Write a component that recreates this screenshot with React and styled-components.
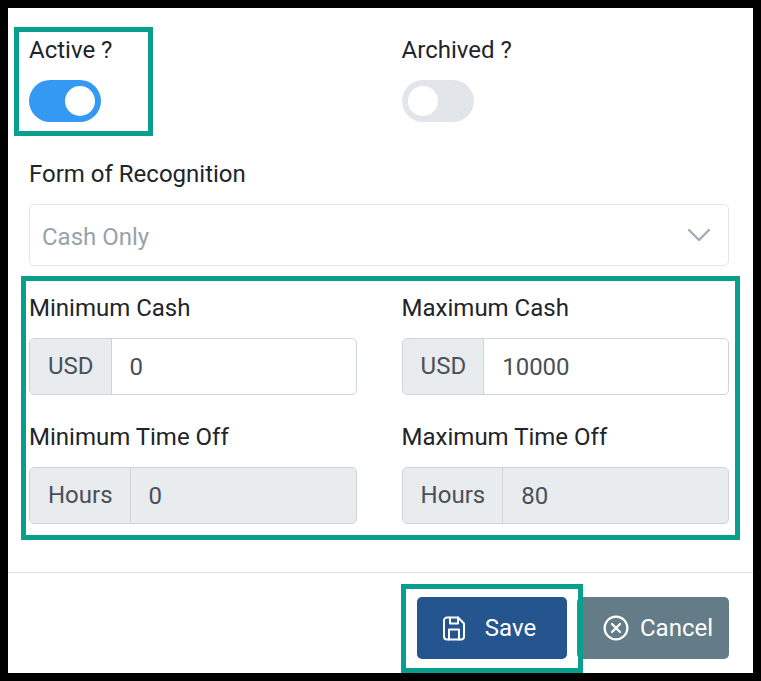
import React from 'react';
import styled, { createGlobalStyle } from 'styled-components';

const GlobalStyle = createGlobalStyle`
  html, body {
    margin: 0;
    padding: 0;
    background: #000;
  }
  body {
    padding: 8px;
    height: 665px;
    overflow: hidden;
    font-family: Roboto, "Liberation Sans", sans-serif;
  }
`;

const Modal = styled.div`
  width: 745px;
  height: 665px;
  background: #fff;
  display: flex;
  flex-direction: column;
`;

const Body = styled.div`
  flex: none;
  height: 565px;
  box-sizing: border-box;
  padding: 27px 24px 0 21px;
  border-bottom: 1px solid #dee2e6;
`;

const Row = styled.div`
  display: grid;
  grid-template-columns: 328px 327.4px;
  column-gap: 44.6px;
`;

const Field = styled.div`
  display: flex;
  flex-direction: column;
`;

const Marked = styled.div`
  position: relative;
  &::after {
    content: '';
    position: absolute;
    top: ${p => p.$top}px;
    left: ${p => p.$left}px;
    right: ${p => p.$right}px;
    bottom: ${p => p.$bottom}px;
    border: 5px solid #089f8f;
    pointer-events: none;
  }
`;

const Label = styled.label`
  font-size: 24px;
  line-height: 30px;
  color: #212529;
  margin-bottom: ${p => p.$gap}px;
`;

const Toggle = styled.div`
  width: 72px;
  height: 42px;
  border-radius: 21px;
  background: ${p => (p.$on ? '#3399f3' : '#e2e5e9')};
  display: flex;
  align-items: center;
  justify-content: ${p => (p.$on ? 'flex-end' : 'flex-start')};
  padding: 0 6px;
  box-sizing: border-box;
  &::before {
    content: '';
    width: 30px;
    height: 30px;
    border-radius: 50%;
    background: #fff;
  }
`;

const SelectBox = styled.div`
  height: 62px;
  box-sizing: border-box;
  border: 1px solid #e6e6e6;
  border-radius: 5px;
  display: flex;
  align-items: center;
  justify-content: space-between;
  padding: 0 17px 0 12px;
  font-size: 24px;
  color: #98a2ab;
`;

const SelectText = styled.span`
  padding-top: 4px;
`;

const InputGroup = styled.div`
  display: flex;
  height: 57px;
  box-sizing: border-box;
  border: 1px solid #ced4da;
  border-radius: 5px;
  overflow: hidden;
  background: ${p => (p.$disabled ? '#e9ecef' : '#fff')};
`;

const Prepend = styled.div`
  background: #e9ecef;
  border-right: 1px solid #ced4da;
  padding: 0 17px 2px 18px;
  display: flex;
  align-items: center;
  font-size: 24px;
  color: #495057;
`;

const Value = styled.div`
  padding: 0 18px;
  display: flex;
  align-items: center;
  font-size: 24px;
  color: #495057;
`;

const Footer = styled.div`
  flex: 1;
  display: flex;
  justify-content: flex-end;
  align-items: flex-start;
  padding: 24px 24px 0 0;
`;

const Button = styled.button`
  height: 62px;
  border: none;
  border-radius: 5px;
  background: ${p => p.$bg};
  color: #fff;
  width: ${p => p.$w}px;
  margin-left: ${p => p.$ml || 0}px;
  font-family: inherit;
  font-size: 24px;
  display: flex;
  align-items: center;
  justify-content: center;
  gap: ${p => p.$gap}px;
  padding: 0 ${p => p.$pr || 0}px 0 ${p => p.$pl || 0}px;
`;

const SaveIcon = () => (
  <svg width="22" height="25" viewBox="0 0 22 25" fill="none" stroke="currentColor" strokeWidth="2" strokeLinecap="round" strokeLinejoin="round">
    <path d="M4 1.5h11l6 6V20.5a3 3 0 0 1-3 3H4a3 3 0 0 1-3-3V4.5a3 3 0 0 1 3-3z" />
    <path d="M7 1.5v6h8v-6" />
    <path d="M6 23.5v-10h10v10" />
  </svg>
);

const CancelIcon = () => (
  <svg width="26" height="26" viewBox="0 0 26 26" fill="none" stroke="currentColor" strokeWidth="2.2" strokeLinecap="round">
    <circle cx="13" cy="13" r="11.4" />
    <path d="M9 9l8 8M17 9l-8 8" />
  </svg>
);

const Chevron = () => (
  <svg width="24" height="14" viewBox="0 0 24 14" fill="none" stroke="#a4abb3" strokeWidth="2.4" strokeLinecap="round" strokeLinejoin="round">
    <path d="M2 2l10 10L22 2" />
  </svg>
);

const InputField = ({ label, unit, value, disabled, marginTop }) => (
  <Field style={{ marginTop }}>
    <Label $gap={15}>{label}</Label>
    <InputGroup $disabled={disabled}>
      <Prepend>{unit}</Prepend>
      <Value>{value}</Value>
    </InputGroup>
  </Field>
);

export default function App() {
  return (
    <>
      <GlobalStyle />
      <Modal>
        <Body>
          <Row>
            <Marked as={Field} $top={-8} $left={-15} $right={204} $bottom={-14}>
              <Label $gap={15}>Active ?</Label>
              <Toggle $on />
            </Marked>
            <Field>
              <Label $gap={15}>Archived ?</Label>
              <Toggle />
            </Field>
          </Row>
          <Field style={{ marginTop: 37 }}>
            <Label $gap={15}>Form of Recognition</Label>
            <SelectBox>
              <SelectText>Cash Only</SelectText>
              <Chevron />
            </SelectBox>
          </Field>
          <Marked $top={-17} $left={-8} $right={-11} $bottom={-16} style={{ marginTop: 27 }}>
            <Row>
              <InputField label="Minimum Cash" unit="USD" value="0" />
              <InputField label="Maximum Cash" unit="USD" value="10000" />
            </Row>
            <Row>
              <InputField label="Minimum Time Off" unit="Hours" value="0" disabled marginTop={27} />
              <InputField label="Maximum Time Off" unit="Hours" value="80" disabled marginTop={27} />
            </Row>
          </Marked>
        </Body>
        <Footer>
          <Marked $top={-13} $left={-16} $right={-16} $bottom={-14} style={{ zIndex: 1 }}>
            <Button $bg="#25558f" $w={150} $gap={20} $pr={5}>
              <SaveIcon />
              Save
            </Button>
          </Marked>
          <Button $bg="#647c87" $w={152} $ml={10} $gap={11} $pl={10}>
            <CancelIcon />
            Cancel
          </Button>
        </Footer>
      </Modal>
    </>
  );
}
